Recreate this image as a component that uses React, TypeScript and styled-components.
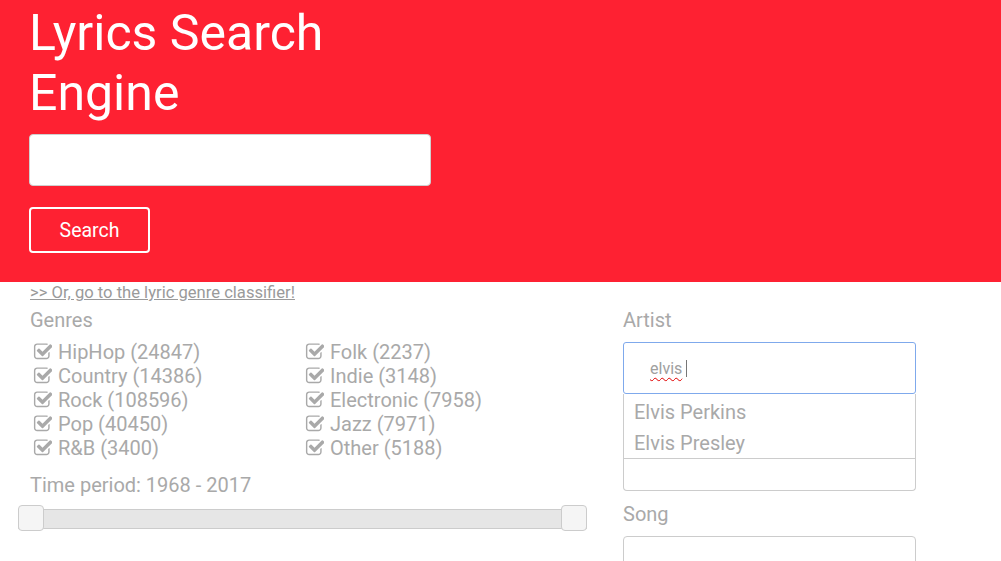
import React from "react";
import styled, { createGlobalStyle } from "styled-components";

const GlobalStyle = createGlobalStyle`
  html, body { margin: 0; padding: 0; background: #ffffff; }
  body { font-family: Roboto, "Noto Sans", Arial, sans-serif; overflow: hidden; }
  * { box-sizing: border-box; }
`;

const Header = styled.header`
  background: #fe2132;
  padding: 3px 30px 29px 29px;
  display: flex;
  flex-direction: column;
  align-items: flex-start;
`;

const Title = styled.h1`
  margin: 0;
  font-size: 50px;
  line-height: 60px;
  font-weight: 400;
  color: #ffffff;
  width: 340px;
`;

const SearchInput = styled.div`
  margin-top: 11px;
  width: 402px;
  height: 52px;
  background: #ffffff;
  border: 1px solid #cfcfcf;
  border-radius: 4px;
`;

const SearchButton = styled.button`
  margin-top: 21px;
  width: 121px;
  height: 46px;
  background: transparent;
  border: 2px solid #ffffff;
  border-radius: 4px;
  color: #ffffff;
  font-family: Roboto, Arial, sans-serif;
  font-size: 19.5px;
  padding: 0;
`;

const Body = styled.main`
  display: flex;
  padding: 1px 0 0 30px;
  gap: 36px;
`;

const LeftCol = styled.section`
  width: 557px;
  display: flex;
  flex-direction: column;
`;

const RightCol = styled.section`
  width: 293px;
  padding-top: 25px;
  display: flex;
  flex-direction: column;
`;

const Link = styled.a`
  font-size: 16.6px;
  line-height: 20px;
  color: #9a9a9a;
  text-decoration: underline;
`;

const Label = styled.div<{ $top?: number }>`
  margin-top: ${(p) => p.$top ?? 0}px;
  font-size: 20px;
  line-height: 24px;
  color: #a9a9a9;
`;

const GenreGrid = styled.div`
  margin-top: 8px;
  display: grid;
  grid-template-columns: 272px 272px;
  grid-auto-flow: column;
  grid-template-rows: repeat(5, 24px);
  padding-left: 3px;
`;

const GenreItem = styled.div`
  display: flex;
  align-items: center;
  gap: 6px;
  font-size: 20px;
  line-height: 24px;
  color: #a9a9a9;
  white-space: nowrap;
`;

const CheckIcon = () => (
  <svg width="19" height="20" viewBox="0 0 1664 1792" fill="#a9a9a9" aria-hidden>
    <path d="M1472 930v318q0 119-84.5 203.5t-203.5 84.5h-832q-119 0-203.5-84.5t-84.5-203.5v-832q0-119 84.5-203.5t203.5-84.5h832q63 0 117 25 15 7 18 23 3 17-9 29l-49 49q-10 10-23 10-3 0-9-2-23-6-45-6h-832q-66 0-113 47t-47 113v832q0 66 47 113t113 47h832q66 0 113-47t47-113v-254q0-13 9-22l64-64q10-10 23-10 6 0 12 3 20 8 20 29zm231-489l-814 814q-24 24-57 24t-57-24l-430-430q-24-24-24-57t24-57l110-110q24-24 57-24t57 24l263 263 647-647q24-24 57-24t57 24l110 110q24 24 24 57t-24 57z" />
  </svg>
);

const Slider = styled.div`
  position: relative;
  margin: 8px 0 0 -12px;
  width: 569px;
  height: 25px;
`;

const Track = styled.div`
  margin-top: 4px;
  height: 20px;
  background: #e6e6e6;
  border: 1px solid #cccccc;
`;

const Handle = styled.div<{ $side: "left" | "right" }>`
  position: absolute;
  top: 0;
  ${(p) => (p.$side === "left" ? "left: 0;" : "right: 0;")}
  width: 26px;
  height: 26px;
  background: #f5f5f5;
  border: 1px solid #cccccc;
  border-radius: 4px;
`;

const ArtistInput = styled.div`
  margin-top: 10px;
  height: 52px;
  border: 1px solid #7fa9ec;
  border-radius: 3px;
  display: flex;
  align-items: center;
  padding-left: 26px;
  font-size: 16px;
  color: #a0a0a0;
`;

const Typed = styled.span`
  text-decoration: underline wavy #e00000;
  text-decoration-thickness: 1px;
  text-underline-offset: 3px;
  text-decoration-skip-ink: none;
`;

const Caret = styled.span`
  display: inline-block;
  width: 1px;
  height: 17px;
  background: #777777;
  margin-left: 4px;
`;

const Suggestions = styled.div`
  border: 1px solid #cccccc;
  border-top: none;
  border-radius: 0 0 4px 4px;
  height: 97px;
`;

const SuggestionList = styled.ul`
  list-style: none;
  margin: 0;
  padding: 3px 0 0;
  height: 65px;
  border-bottom: 1px solid #cccccc;
`;

const Suggestion = styled.li`
  padding-left: 10px;
  font-size: 20px;
  line-height: 31px;
  color: #a9a9a9;
`;

const TextInput = styled.div`
  margin-top: 10px;
  height: 52px;
  border: 1px solid #cccccc;
  border-radius: 4px;
`;

const genres: [string, number][] = [
  ["HipHop", 24847],
  ["Country", 14386],
  ["Rock", 108596],
  ["Pop", 40450],
  ["R&B", 3400],
  ["Folk", 2237],
  ["Indie", 3148],
  ["Electronic", 7958],
  ["Jazz", 7971],
  ["Other", 5188],
];

export default function App() {
  return (
    <>
      <GlobalStyle />
      <Header>
        <Title>Lyrics Search Engine</Title>
        <SearchInput />
        <SearchButton>Search</SearchButton>
      </Header>
      <Body>
        <LeftCol>
          <Link href="#">&gt;&gt; Or, go to the lyric genre classifier!</Link>
          <Label $top={5}>Genres</Label>
          <GenreGrid>
            {genres.map(([name, count]) => (
              <GenreItem key={name}>
                <CheckIcon />
                <span>
                  {name} ({count})
                </span>
              </GenreItem>
            ))}
          </GenreGrid>
          <Label $top={13}>Time period: 1968 - 2017</Label>
          <Slider>
            <Track />
            <Handle $side="left" />
            <Handle $side="right" />
          </Slider>
        </LeftCol>
        <RightCol>
          <Label>Artist</Label>
          <ArtistInput>
            <Typed>elvis</Typed>
            <Caret />
          </ArtistInput>
          <Suggestions>
            <SuggestionList>
              <Suggestion>Elvis Perkins</Suggestion>
              <Suggestion>Elvis Presley</Suggestion>
            </SuggestionList>
          </Suggestions>
          <Label $top={11}>Song</Label>
          <TextInput />
        </RightCol>
      </Body>
    </>
  );
}
